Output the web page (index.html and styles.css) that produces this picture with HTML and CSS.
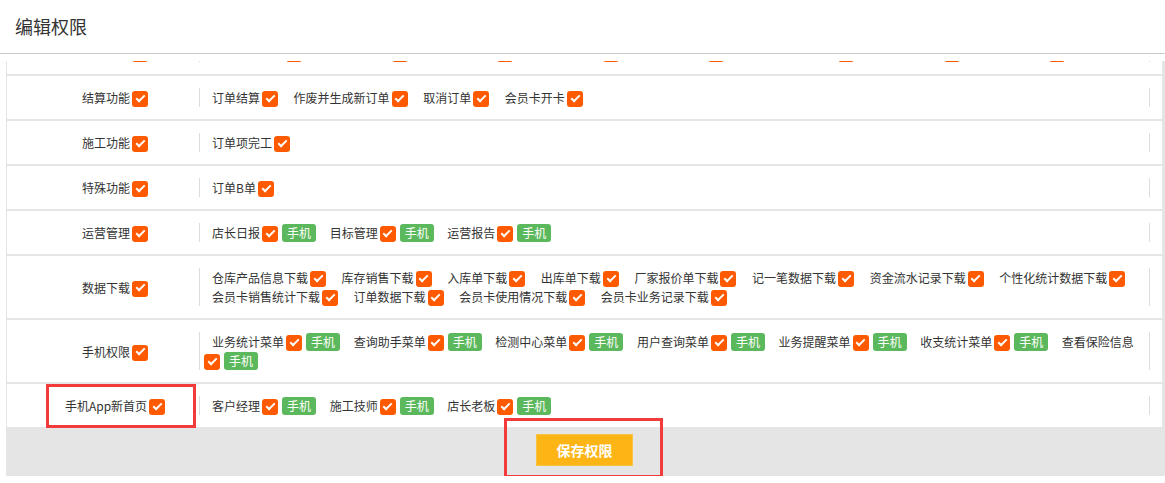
FILE: index.html
```html
<!DOCTYPE html>
<html lang="zh-CN">
<head>
<meta charset="utf-8">
<title>编辑权限</title>
<link rel="stylesheet" href="styles.css">
</head>
<body>
<div class="hd">编辑权限</div>
<div class="bd">
  <div class="rows">
    <div class="row">
      <div class="label"><span class="ph w4"></span><i class="cb"></i></div>
      <div class="perms"><span class="perm"><span class="ph w6"></span><i class="cb"></i></span><span class="perm"><span class="ph w6"></span><i class="cb"></i></span><span class="perm"><span class="ph w6"></span><i class="cb"></i></span><span class="perm"><span class="ph w6"></span><i class="cb"></i></span><span class="perm"><span class="ph w6"></span><i class="cb"></i></span><span class="perm"><span class="ph w8"></span><i class="cb"></i></span><span class="perm"><span class="ph w6"></span><i class="cb"></i></span><span class="perm"><span class="ph w6"></span><i class="cb"></i></span></div>
    </div>
    <div class="row">
      <div class="label">结算功能<i class="cb"></i></div>
      <div class="perms"><span class="perm">订单结算<i class="cb"></i></span><span class="perm">作废并生成新订单<i class="cb"></i></span><span class="perm">取消订单<i class="cb"></i></span><span class="perm">会员卡开卡<i class="cb"></i></span></div>
    </div>
    <div class="row">
      <div class="label">施工功能<i class="cb"></i></div>
      <div class="perms"><span class="perm">订单项完工<i class="cb"></i></span></div>
    </div>
    <div class="row">
      <div class="label">特殊功能<i class="cb"></i></div>
      <div class="perms"><span class="perm">订单B单<i class="cb"></i></span></div>
    </div>
    <div class="row">
      <div class="label">运营管理<i class="cb"></i></div>
      <div class="perms"><span class="perm m">店长日报<i class="cb"></i><span class="tag">手机</span></span><span class="perm m">目标管理<i class="cb"></i><span class="tag">手机</span></span><span class="perm m">运营报告<i class="cb"></i><span class="tag">手机</span></span></div>
    </div>
    <div class="row">
      <div class="label">数据下载<i class="cb"></i></div>
      <div class="perms"><span class="perm">仓库产品信息下载<i class="cb"></i></span><span class="perm">库存销售下载<i class="cb"></i></span><span class="perm">入库单下载<i class="cb"></i></span><span class="perm">出库单下载<i class="cb"></i></span><span class="perm">厂家报价单下载<i class="cb"></i></span><span class="perm">记一笔数据下载<i class="cb"></i></span><span class="perm">资金流水记录下载<i class="cb"></i></span><span class="perm">个性化统计数据下载<i class="cb"></i></span><span class="perm">会员卡销售统计下载<i class="cb"></i></span><span class="perm">订单数据下载<i class="cb"></i></span><span class="perm">会员卡使用情况下载<i class="cb"></i></span><span class="perm">会员卡业务记录下载<i class="cb"></i></span></div>
    </div>
    <div class="row">
      <div class="label">手机权限<i class="cb"></i></div>
      <div class="perms"><span class="perm m">业务统计菜单<i class="cb"></i><span class="tag">手机</span></span><span class="perm m">查询助手菜单<i class="cb"></i><span class="tag">手机</span></span><span class="perm m">检测中心菜单<i class="cb"></i><span class="tag">手机</span></span><span class="perm m">用户查询菜单<i class="cb"></i><span class="tag">手机</span></span><span class="perm m">业务提醒菜单<i class="cb"></i><span class="tag">手机</span></span><span class="perm m">收支统计菜单<i class="cb"></i><span class="tag">手机</span></span><span class="perm m">查看保险信息<i class="cb"></i><span class="tag">手机</span></span></div>
    </div>
    <div class="row">
      <div class="label">手机App新首页<i class="cb"></i></div>
      <div class="perms"><span class="perm m">客户经理<i class="cb"></i><span class="tag">手机</span></span><span class="perm m">施工技师<i class="cb"></i><span class="tag">手机</span></span><span class="perm m">店长老板<i class="cb"></i><span class="tag">手机</span></span></div>
    </div>
  </div>
  <div class="foot"><button class="save" type="button">保存权限</button></div>
</div>
<div class="mark mark-label"></div>
<div class="mark mark-save"></div>
</body>
</html>
```

FILE: styles.css
```css
html, body {
  margin: 0;
  padding: 0;
  background: #fff;
}
body {
  position: relative;
  font-family: "Noto Sans CJK SC", "Liberation Sans", sans-serif;
  font-size: 12px;
  color: #333;
}
.hd {
  height: 53px;
  line-height: 53px;
  border-bottom: 1px solid #cccccc;
  padding-left: 15px;
  font-size: 18px;
  color: #333;
}
.bd {
  margin: 7px 0 0 6px;
  height: 415px;
  overflow: hidden;
  background: #e5e5e5;
  padding: 0 3px 0 1px;
}
.rows {
  display: flex;
  flex-direction: column;
  gap: 2px;
  margin-top: -30px;
}
.row {
  display: grid;
  grid-template-columns: 192px 1fr;
  background: #fff;
}
.label {
  align-self: center;
  padding-left: 24px;
  text-align: center;
  line-height: 19px;
  white-space: nowrap;
}
.perms {
  margin: 12px 12px 12px 0;
  border-left: 1px solid #dddddd;
  border-right: 1px solid #dddddd;
  padding-left: 2px;
  line-height: 19px;
}
.perm {
  margin-left: 10px;
  margin-right: 5.6px;
}
.perm.m {
  margin-right: 3.6px;
}
.ph {
  display: inline-block;
  height: 19px;
  vertical-align: top;
}
.w4 { width: 48px; }
.w6 { width: 72px; }
.w8 { width: 96px; }
.cb {
  position: relative;
  display: inline-block;
  width: 16px;
  height: 16px;
  margin: 3px 0 0 2px;
  border-radius: 3px;
  background: #ff5a00;
  vertical-align: top;
}
.cb::after {
  content: "";
  position: absolute;
  left: 5.7px;
  top: 1.9px;
  width: 3px;
  height: 7px;
  border-right: 2px solid #fff;
  border-bottom: 2px solid #fff;
  transform: rotate(45deg);
}
.tag {
  display: inline-block;
  height: 18px;
  line-height: 18px;
  margin: 1px 0 0 4px;
  padding: 0 5px;
  border-radius: 3px;
  background: #5cb85c;
  color: #fff;
  vertical-align: top;
}
.foot {
  height: 49px;
  box-sizing: border-box;
  padding-top: 7px;
  text-align: center;
}
.save {
  width: 97px;
  height: 32px;
  border: 1px solid #f7c443;
  background: #fdb515;
  color: #fff;
  font-family: inherit;
  font-size: 14px;
  font-weight: bold;
  padding: 0;
}
.mark {
  position: absolute;
  box-sizing: border-box;
  border: 3px solid #f23c3c;
}
.mark-label {
  left: 46px;
  top: 384px;
  width: 150px;
  height: 44px;
}
.mark-save {
  left: 504px;
  top: 418px;
  width: 159px;
  height: 60px;
}
```
